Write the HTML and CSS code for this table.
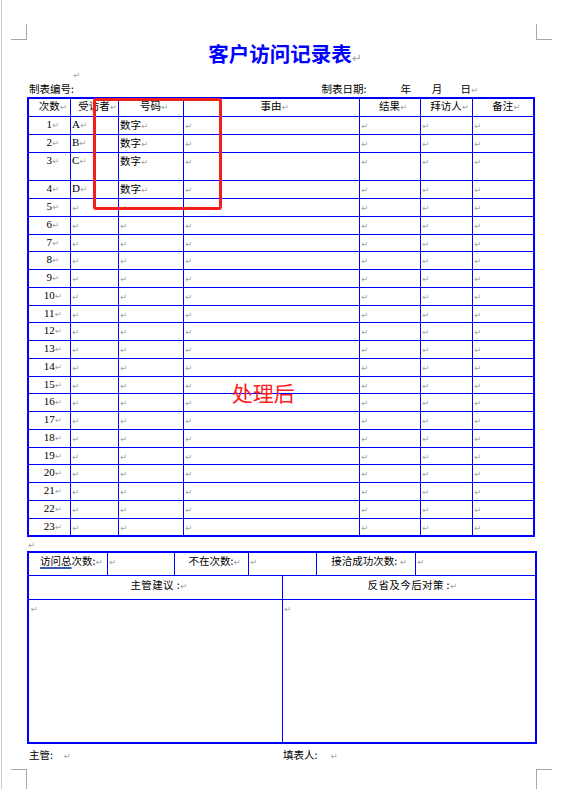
FILE: index.html
```html
<!DOCTYPE html>
<html lang="zh-CN">
<head>
<meta charset="utf-8">
<title>客户访问记录表</title>
<link rel="stylesheet" href="styles.css">
</head>
<body>
<div class="page">
  <span class="crop tl"></span>
  <span class="crop tr"></span>
  <span class="crop bl"></span>
  <span class="crop br"></span>

  <h1 class="title"><span>客户访问记录表</span><span class="pm z tpm">↵</span></h1>
  <p class="blank"><span class="pm">↵</span></p>
  <div class="info">
    <span class="info-no">制表编号:</span>
    <span class="info-date">制表日期:</span>
    <span class="d-y">年</span>
    <span class="d-m">月</span>
    <span>日</span>
    <span class="pm">↵</span>
  </div>

  <table class="t1">
    <colgroup>
      <col class="a1"><col class="a2"><col class="a3"><col class="a4"><col class="a5"><col class="a6"><col class="a7">
    </colgroup>
    <thead>
      <tr class="h">
        <td class="c">次数<span class="pm z">↵</span></td>
        <td class="c">受访者<span class="pm z">↵</span></td>
        <td class="c">号码<span class="pm z">↵</span></td>
        <td class="c">事由<span class="pm z">↵</span></td>
        <td class="c">结果<span class="pm z">↵</span></td>
        <td class="c">拜访人<span class="pm z">↵</span></td>
        <td class="c">备注<span class="pm z">↵</span></td>
      </tr>
    </thead>
    <tbody>
      <tr class="r12"><td class="c n">1<span class="pm z">↵</span></td><td class="n">A<span class="pm">↵</span></td><td>数字<span class="pm">↵</span></td><td><span class="pm">↵</span></td><td><span class="pm">↵</span></td><td><span class="pm">↵</span></td><td><span class="pm">↵</span></td></tr>
      <tr class="r12"><td class="c n">2<span class="pm z">↵</span></td><td class="n">B<span class="pm">↵</span></td><td>数字<span class="pm">↵</span></td><td><span class="pm">↵</span></td><td><span class="pm">↵</span></td><td><span class="pm">↵</span></td><td><span class="pm">↵</span></td></tr>
      <tr class="r3"><td class="c n">3<span class="pm z">↵</span></td><td class="n">C<span class="pm">↵</span></td><td>数字<span class="pm">↵</span></td><td><span class="pm">↵</span></td><td><span class="pm">↵</span></td><td><span class="pm">↵</span></td><td><span class="pm">↵</span></td></tr>
      <tr class="r4"><td class="c n">4<span class="pm z">↵</span></td><td class="n">D<span class="pm">↵</span></td><td>数字<span class="pm">↵</span></td><td><span class="pm">↵</span></td><td><span class="pm">↵</span></td><td><span class="pm">↵</span></td><td><span class="pm">↵</span></td></tr>
      <tr><td class="c n">5<span class="pm z">↵</span></td><td><span class="pm">↵</span></td><td><span class="pm">↵</span></td><td><span class="pm">↵</span></td><td><span class="pm">↵</span></td><td><span class="pm">↵</span></td><td><span class="pm">↵</span></td></tr>
      <tr><td class="c n">6<span class="pm z">↵</span></td><td><span class="pm">↵</span></td><td><span class="pm">↵</span></td><td><span class="pm">↵</span></td><td><span class="pm">↵</span></td><td><span class="pm">↵</span></td><td><span class="pm">↵</span></td></tr>
      <tr><td class="c n">7<span class="pm z">↵</span></td><td><span class="pm">↵</span></td><td><span class="pm">↵</span></td><td><span class="pm">↵</span></td><td><span class="pm">↵</span></td><td><span class="pm">↵</span></td><td><span class="pm">↵</span></td></tr>
      <tr><td class="c n">8<span class="pm z">↵</span></td><td><span class="pm">↵</span></td><td><span class="pm">↵</span></td><td><span class="pm">↵</span></td><td><span class="pm">↵</span></td><td><span class="pm">↵</span></td><td><span class="pm">↵</span></td></tr>
      <tr><td class="c n">9<span class="pm z">↵</span></td><td><span class="pm">↵</span></td><td><span class="pm">↵</span></td><td><span class="pm">↵</span></td><td><span class="pm">↵</span></td><td><span class="pm">↵</span></td><td><span class="pm">↵</span></td></tr>
      <tr><td class="c n">10<span class="pm z">↵</span></td><td><span class="pm">↵</span></td><td><span class="pm">↵</span></td><td><span class="pm">↵</span></td><td><span class="pm">↵</span></td><td><span class="pm">↵</span></td><td><span class="pm">↵</span></td></tr>
      <tr><td class="c n">11<span class="pm z">↵</span></td><td><span class="pm">↵</span></td><td><span class="pm">↵</span></td><td><span class="pm">↵</span></td><td><span class="pm">↵</span></td><td><span class="pm">↵</span></td><td><span class="pm">↵</span></td></tr>
      <tr><td class="c n">12<span class="pm z">↵</span></td><td><span class="pm">↵</span></td><td><span class="pm">↵</span></td><td><span class="pm">↵</span></td><td><span class="pm">↵</span></td><td><span class="pm">↵</span></td><td><span class="pm">↵</span></td></tr>
      <tr><td class="c n">13<span class="pm z">↵</span></td><td><span class="pm">↵</span></td><td><span class="pm">↵</span></td><td><span class="pm">↵</span></td><td><span class="pm">↵</span></td><td><span class="pm">↵</span></td><td><span class="pm">↵</span></td></tr>
      <tr><td class="c n">14<span class="pm z">↵</span></td><td><span class="pm">↵</span></td><td><span class="pm">↵</span></td><td><span class="pm">↵</span></td><td><span class="pm">↵</span></td><td><span class="pm">↵</span></td><td><span class="pm">↵</span></td></tr>
      <tr><td class="c n">15<span class="pm z">↵</span></td><td><span class="pm">↵</span></td><td><span class="pm">↵</span></td><td><span class="pm">↵</span></td><td><span class="pm">↵</span></td><td><span class="pm">↵</span></td><td><span class="pm">↵</span></td></tr>
      <tr><td class="c n">16<span class="pm z">↵</span></td><td><span class="pm">↵</span></td><td><span class="pm">↵</span></td><td><span class="pm">↵</span></td><td><span class="pm">↵</span></td><td><span class="pm">↵</span></td><td><span class="pm">↵</span></td></tr>
      <tr><td class="c n">17<span class="pm z">↵</span></td><td><span class="pm">↵</span></td><td><span class="pm">↵</span></td><td><span class="pm">↵</span></td><td><span class="pm">↵</span></td><td><span class="pm">↵</span></td><td><span class="pm">↵</span></td></tr>
      <tr><td class="c n">18<span class="pm z">↵</span></td><td><span class="pm">↵</span></td><td><span class="pm">↵</span></td><td><span class="pm">↵</span></td><td><span class="pm">↵</span></td><td><span class="pm">↵</span></td><td><span class="pm">↵</span></td></tr>
      <tr><td class="c n">19<span class="pm z">↵</span></td><td><span class="pm">↵</span></td><td><span class="pm">↵</span></td><td><span class="pm">↵</span></td><td><span class="pm">↵</span></td><td><span class="pm">↵</span></td><td><span class="pm">↵</span></td></tr>
      <tr><td class="c n">20<span class="pm z">↵</span></td><td><span class="pm">↵</span></td><td><span class="pm">↵</span></td><td><span class="pm">↵</span></td><td><span class="pm">↵</span></td><td><span class="pm">↵</span></td><td><span class="pm">↵</span></td></tr>
      <tr><td class="c n">21<span class="pm z">↵</span></td><td><span class="pm">↵</span></td><td><span class="pm">↵</span></td><td><span class="pm">↵</span></td><td><span class="pm">↵</span></td><td><span class="pm">↵</span></td><td><span class="pm">↵</span></td></tr>
      <tr><td class="c n">22<span class="pm z">↵</span></td><td><span class="pm">↵</span></td><td><span class="pm">↵</span></td><td><span class="pm">↵</span></td><td><span class="pm">↵</span></td><td><span class="pm">↵</span></td><td><span class="pm">↵</span></td></tr>
      <tr><td class="c n">23<span class="pm z">↵</span></td><td><span class="pm">↵</span></td><td><span class="pm">↵</span></td><td><span class="pm">↵</span></td><td><span class="pm">↵</span></td><td><span class="pm">↵</span></td><td><span class="pm">↵</span></td></tr>
    </tbody>
  </table>

  <p class="gap"><span class="pm">↵</span></p>

  <table class="t2">
    <colgroup>
      <col class="b1"><col class="b2"><col class="b3"><col class="b4"><col class="b5"><col class="b6"><col class="b7">
    </colgroup>
    <tr class="s1">
      <td class="c"><span class="ul">访问总</span>次数:<span class="pm z">↵</span></td>
      <td><span class="pm">↵</span></td>
      <td class="c">不在次数:<span class="pm z">↵</span></td>
      <td colspan="2"><span class="pm">↵</span></td>
      <td class="c">接洽成功次数: <span class="pm z">↵</span></td>
      <td><span class="pm">↵</span></td>
    </tr>
    <tr class="s2">
      <td colspan="4" class="c sp">主管建议 :<span class="pm z">↵</span></td>
      <td colspan="3" class="c sp">反省及今后对策 :<span class="pm z">↵</span></td>
    </tr>
    <tr class="s3">
      <td colspan="4"><span class="pm">↵</span></td>
      <td colspan="3"><span class="pm">↵</span></td>
    </tr>
  </table>

  <div class="foot">
    <span class="f1">主管:<span class="pm p1">↵</span></span>
    <span>填表人:<span class="pm p2">↵</span></span>
  </div>

  <div class="mark-box"></div>
  <div class="mark-text">处理后</div>
</div>
</body>
</html>
```

FILE: styles.css
```css
html, body {
  margin: 0;
  padding: 0;
  background: #ffffff;
  overflow: hidden;
}

body {
  font-family: "Noto Sans CJK SC", "Noto Sans", sans-serif;
  font-size: 10.5px;
  color: #000000;
}

.page {
  position: relative;
  width: 559px;
  height: 789px;
  margin-left: 1px;
  border-left: 1px solid #cbcbcb;
  padding: 40px 27px 0 25px;
  box-sizing: border-box;
  overflow: hidden;
}

/* crop marks of the document page */
.crop {
  position: absolute;
  width: 16px;
  height: 16px;
  box-sizing: border-box;
  border: 0 solid #a8a8a8;
}
.crop.tl { left: 9px; top: 24px; border-right-width: 1px; border-bottom-width: 1px; }
.crop.tr { left: 534px; top: 24px; border-left-width: 1px; border-bottom-width: 1px; }
.crop.bl { left: 9px; top: 769px; height: 20px; border-right-width: 1px; border-top-width: 1px; }
.crop.br { left: 534px; top: 769px; height: 20px; border-left-width: 1px; border-top-width: 1px; }

/* paragraph marks */
.pm {
  font-family: "DejaVu Sans", sans-serif;
  font-size: 8.5px;
  font-weight: normal;
  line-height: 0;
  color: #a3a3a3;
}
.z {
  display: inline-block;
  width: 0;
  white-space: nowrap;
}

.title {
  margin: 0;
  text-align: center;
  font-size: 20.5px;
  font-weight: 700;
  color: #0000ff;
  line-height: 26.5px;
}
.title .tpm {
  font-size: 12px;
}

.blank {
  margin: 0;
  line-height: 14px;
  padding-left: 46px;
}

.info {
  display: flex;
  align-items: baseline;
  line-height: 15px;
  padding-left: 2px;
  margin-bottom: 1.5px;
}
.info-no { width: 292.5px; }
.info-date { width: 79px; }
.d-y { width: 31.3px; }
.d-m { width: 28.7px; }

/* main record table */
.t1, .t2 {
  border-collapse: collapse;
  table-layout: fixed;
  border: 2px solid #0000ff;
}
.t1 { width: 508px; }
.t2 { width: 510px; }

.t1 td, .t2 td {
  border: 1px solid #0000ff;
  padding: 0 1.5px;
  vertical-align: top;
  line-height: 15px;
  white-space: nowrap;
  overflow: visible;
}
.c { text-align: center; }
.n { font-family: "Liberation Serif", "Noto Sans CJK SC", serif; font-size: 11px; }
.n .pm { font-size: 8.5px; }

.t1 thead td { line-height: 14px; }

.a1 { width: 42px; }
.a2 { width: 48px; }
.a3 { width: 65px; }
.a4 { width: 176px; }
.a5 { width: 61px; }
.a6 { width: 52px; }
.a7 { width: 62px; }

.t1 tr { height: 17.75px; }
.t1 tr.h { height: 18px; }
.t1 tr.r12 { height: 18.2px; }
.t1 tr.r3 { height: 28.2px; }
.t1 tr.r4 { height: 18px; }

.gap {
  margin: 0;
  line-height: 14px;
  padding-left: 1px;
}

.b1 { width: 79px; }
.b2 { width: 67px; }
.b3 { width: 74px; }
.b4 { width: 34px; }
.b5 { width: 34px; }
.b6 { width: 99px; }
.b7 { width: 121px; }

.t2 tr.s1 { height: 24px; }
.t2 tr.s2 { height: 23.5px; }
.t2 tr.s3 { height: 144px; }
.t2 tr.s2 td { padding-top: 1px; }
.sp { letter-spacing: 0.4px; }

.ul {
  text-decoration: underline;
  text-decoration-color: #3558b0;
  text-decoration-thickness: 1.5px;
  text-underline-offset: 2px;
}

.foot {
  display: flex;
  align-items: baseline;
  line-height: 15px;
  padding-left: 2px;
  margin-top: 2.5px;
}
.f1 { width: 254px; }
.p1 { margin-left: 10.5px; }
.p2 { margin-left: 13px; }

/* annotation overlay */
.mark-box {
  position: absolute;
  left: 90.7px;
  top: 98px;
  width: 129.5px;
  height: 112px;
  box-sizing: border-box;
  border: 3px solid #f0201e;
  border-radius: 3px;
}
.mark-text {
  position: absolute;
  left: 229.7px;
  top: 381.5px;
  font-size: 21px;
  line-height: 21px;
  color: #ff1c1c;
}
```
